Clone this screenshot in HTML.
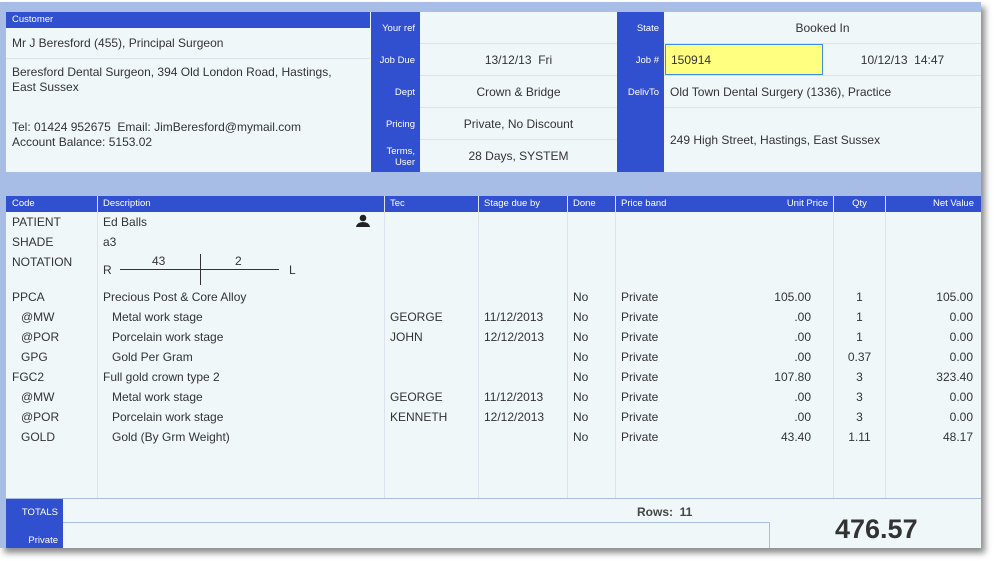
<!DOCTYPE html>
<html><head><meta charset="utf-8"><style>
*{margin:0;padding:0;box-sizing:border-box}
body{width:994px;height:561px;background:#fff;font-family:"Liberation Sans",sans-serif;color:#333;position:relative;overflow:hidden}
.a{position:absolute}
.win{left:0;top:2px;width:981px;height:546px;background:#a8bde6;box-shadow:4px 5px 6px rgba(0,0,0,.45)}
.bl{background:#3050d0;color:#fff}
.pn{background:#eff7f9}
.t{font-size:12px;white-space:nowrap}
.lb{font-size:9.5px;color:#fff;text-align:right;white-space:nowrap}
.hl{background:#dde3ea;height:1px}
.vl{background:#dde3ea;width:1px}
.th{font-size:9.5px;color:#fff;top:196px;height:16px;line-height:16px;white-space:nowrap}
.r{text-align:right}
.c{text-align:center}
</style></head><body>
<div class="a win"></div>
<!-- top panel -->
<div class="a pn" style="left:6px;top:12px;width:975px;height:160px"></div>
<div class="a bl" style="left:6px;top:12px;width:364px;height:16px"></div>
<div class="a lb" style="left:12px;top:14px;text-align:left">Customer</div>
<div class="a t" style="left:12px;top:36px">Mr J Beresford (455), Principal Surgeon</div>
<div class="a hl" style="left:6px;top:58px;width:364px"></div>
<div class="a t" style="left:12px;top:65px;line-height:15px">Beresford Dental Surgeon, 394 Old London Road, Hastings,<br>East Sussex</div>
<div class="a t" style="left:12px;top:120px;line-height:15px">Tel: 01424 952675&nbsp; Email: JimBeresford@mymail.com<br>Account Balance: 5153.02</div>
<div class="a bl" style="left:371px;top:12px;width:49px;height:160px"></div>
<div class="a bl" style="left:617px;top:12px;width:47px;height:160px"></div>
<div class="a hl" style="left:420px;top:43px;width:197px"></div>
<div class="a hl" style="left:420px;top:75px;width:197px"></div>
<div class="a hl" style="left:420px;top:107px;width:197px"></div>
<div class="a hl" style="left:420px;top:139px;width:197px"></div>
<div class="a hl" style="left:664px;top:43px;width:317px"></div>
<div class="a hl" style="left:664px;top:75px;width:317px"></div>
<div class="a hl" style="left:664px;top:107px;width:317px"></div>
<div class="a lb" style="left:371px;width:44px;top:23px">Your ref</div>
<div class="a lb" style="left:371px;width:44px;top:55px">Job Due</div>
<div class="a lb" style="left:371px;width:44px;top:87px">Dept</div>
<div class="a lb" style="left:371px;width:44px;top:119px">Pricing</div>
<div class="a lb" style="left:371px;width:44px;top:146px;line-height:11px">Terms,<br>User</div>
<div class="a t c" style="left:420px;width:197px;top:53px">13/12/13&nbsp; Fri</div>
<div class="a t c" style="left:420px;width:197px;top:85px">Crown &amp; Bridge</div>
<div class="a t c" style="left:420px;width:197px;top:117px">Private, No Discount</div>
<div class="a t c" style="left:420px;width:197px;top:149px">28 Days, SYSTEM</div>
<div class="a lb" style="left:617px;width:42px;top:23px">State</div>
<div class="a lb" style="left:617px;width:42px;top:55px">Job #</div>
<div class="a lb" style="left:617px;width:42px;top:87px">DelivTo</div>
<div class="a t c" style="left:664px;width:317px;top:21px">Booked In</div>
<div class="a" style="left:665px;top:44px;width:158px;height:31px;background:#ffff80;border:1px solid #3a8ee6"></div>
<div class="a t" style="left:671px;top:53px">150914</div>
<div class="a t c" style="left:824px;width:157px;top:53px">10/12/13&nbsp; 14:47</div>
<div class="a t" style="left:670px;top:85px">Old Town Dental Surgery (1336), Practice</div>
<div class="a t" style="left:670px;top:133px">249 High Street, Hastings, East Sussex</div>
<!-- table -->
<div class="a pn" style="left:6px;top:196px;width:975px;height:302px"></div>
<div class="a bl" style="left:6px;top:196px;width:975px;height:16px"></div>
<div class="a vl" style="left:97px;top:196px;height:302px"></div>
<div class="a vl" style="left:384px;top:196px;height:302px"></div>
<div class="a vl" style="left:478px;top:196px;height:302px"></div>
<div class="a vl" style="left:567px;top:196px;height:302px"></div>
<div class="a vl" style="left:615px;top:196px;height:302px"></div>
<div class="a vl" style="left:833px;top:196px;height:302px"></div>
<div class="a vl" style="left:885px;top:196px;height:302px"></div>
<div class="a th" style="left:12px">Code</div>
<div class="a th" style="left:103px">Description</div>
<div class="a th" style="left:390px">Tec</div>
<div class="a th" style="left:484px">Stage due by</div>
<div class="a th" style="left:573px">Done</div>
<div class="a th" style="left:621px">Price band</div>
<div class="a th r" style="left:700px;width:128px">Unit Price</div>
<div class="a th c" style="left:834px;width:51px">Qty</div>
<div class="a th r" style="left:886px;width:88px">Net Value</div>
<div class="a t" style="left:12px;top:215px">PATIENT</div>
<div class="a t" style="left:103px;top:215px">Ed Balls</div>
<svg class="a" style="left:355px;top:214px" width="16" height="14" viewBox="0 0 16 14"><circle cx="8" cy="4" r="3.3" fill="#222"/><path d="M1 13 Q2 8 8 8 Q14 8 15 13Z" fill="#222"/></svg>
<div class="a t" style="left:12px;top:235px">SHADE</div>
<div class="a t" style="left:103px;top:235px">a3</div>
<div class="a t" style="left:12px;top:255px">NOTATION</div>
<div class="a t" style="left:103px;top:263px">R</div>
<div class="a t" style="left:152px;top:254px">43</div>
<div class="a t" style="left:235px;top:254px">2</div>
<div class="a t" style="left:289px;top:263px">L</div>
<div class="a" style="left:120px;top:269px;width:159px;height:1px;background:#333"></div>
<div class="a" style="left:200px;top:254px;width:1px;height:31px;background:#333"></div>
<div class="a" style="left:0;top:290px;width:981px;font-size:12px">
<style>.rw{position:absolute;left:0;width:981px;height:20px}.rw span{position:absolute;white-space:nowrap}</style>
<div class="rw" style="top:0"><span style="left:12px">PPCA</span><span style="left:103px">Precious Post &amp; Core Alloy</span><span style="left:573px">No</span><span style="left:621px">Private</span><span style="right:170px">105.00</span><span style="left:834px;width:51px;text-align:center">1</span><span style="right:8px">105.00</span></div>
<div class="rw" style="top:20px"><span style="left:21px">@MW</span><span style="left:112px">Metal work stage</span><span style="left:390px">GEORGE</span><span style="left:484px">11/12/2013</span><span style="left:573px">No</span><span style="left:621px">Private</span><span style="right:170px">.00</span><span style="left:834px;width:51px;text-align:center">1</span><span style="right:8px">0.00</span></div>
<div class="rw" style="top:40px"><span style="left:21px">@POR</span><span style="left:112px">Porcelain work stage</span><span style="left:390px">JOHN</span><span style="left:484px">12/12/2013</span><span style="left:573px">No</span><span style="left:621px">Private</span><span style="right:170px">.00</span><span style="left:834px;width:51px;text-align:center">1</span><span style="right:8px">0.00</span></div>
<div class="rw" style="top:60px"><span style="left:21px">GPG</span><span style="left:112px">Gold Per Gram</span><span style="left:573px">No</span><span style="left:621px">Private</span><span style="right:170px">.00</span><span style="left:834px;width:51px;text-align:center">0.37</span><span style="right:8px">0.00</span></div>
<div class="rw" style="top:80px"><span style="left:12px">FGC2</span><span style="left:103px">Full gold crown type 2</span><span style="left:573px">No</span><span style="left:621px">Private</span><span style="right:170px">107.80</span><span style="left:834px;width:51px;text-align:center">3</span><span style="right:8px">323.40</span></div>
<div class="rw" style="top:100px"><span style="left:21px">@MW</span><span style="left:112px">Metal work stage</span><span style="left:390px">GEORGE</span><span style="left:484px">11/12/2013</span><span style="left:573px">No</span><span style="left:621px">Private</span><span style="right:170px">.00</span><span style="left:834px;width:51px;text-align:center">3</span><span style="right:8px">0.00</span></div>
<div class="rw" style="top:120px"><span style="left:21px">@POR</span><span style="left:112px">Porcelain work stage</span><span style="left:390px">KENNETH</span><span style="left:484px">12/12/2013</span><span style="left:573px">No</span><span style="left:621px">Private</span><span style="right:170px">.00</span><span style="left:834px;width:51px;text-align:center">3</span><span style="right:8px">0.00</span></div>
<div class="rw" style="top:140px"><span style="left:21px">GOLD</span><span style="left:112px">Gold (By Grm Weight)</span><span style="left:573px">No</span><span style="left:621px">Private</span><span style="right:170px">43.40</span><span style="left:834px;width:51px;text-align:center">1.11</span><span style="right:8px">48.17</span></div>
</div>
<!-- totals -->
<div class="a pn" style="left:6px;top:499px;width:975px;height:49px"></div>
<div class="a bl" style="left:6px;top:499px;width:57px;height:49px"></div>
<div class="a lb" style="left:6px;width:52px;top:507px">TOTALS</div>
<div class="a lb" style="left:6px;width:52px;top:535px">Private</div>
<div class="a" style="left:63px;top:522px;width:707px;height:26px;border-top:1px solid #a8bde6;border-right:1px solid #a8bde6"></div>
<div class="a t" style="left:637px;top:505px;font-weight:bold;color:#444">Rows:&nbsp; 11</div>
<div class="a" style="left:835px;top:514px;font-size:27px;font-weight:bold;color:#333">476.57</div>
</body></html>
